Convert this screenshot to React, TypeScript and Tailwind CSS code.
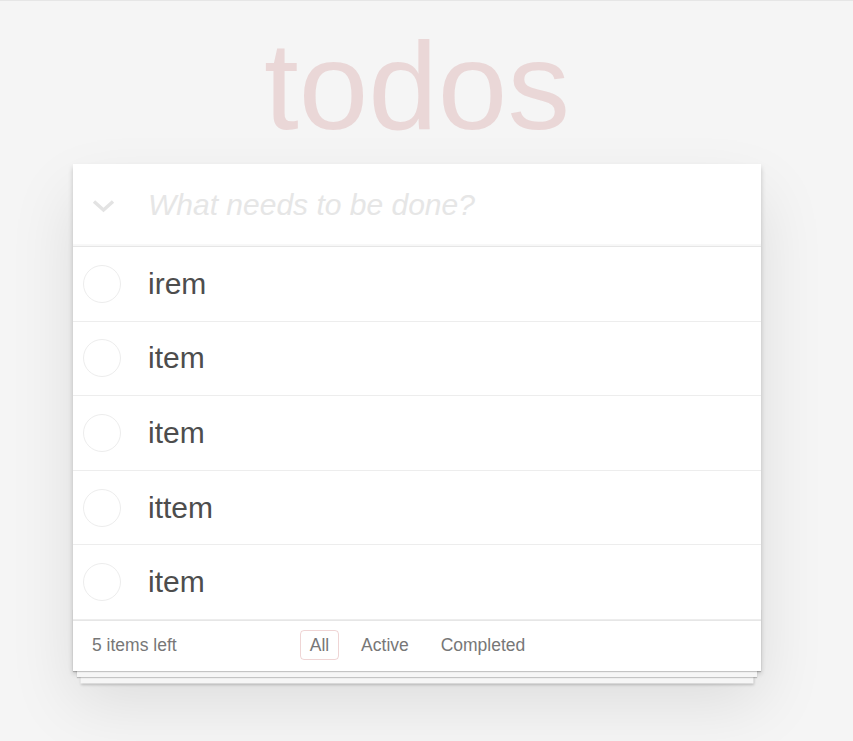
import React from 'react';

const todos = ['irem', 'item', 'item', 'ittem', 'item'];

function TodoRow({ title }: { title: string }) {
  return (
    <li className="flex h-[74.6px] items-center border-b border-[#ededed]">
      <div className="flex w-[58px] justify-center">
        <span className="block h-[38px] w-[38px] rounded-full border border-[#ededed]" />
      </div>
      <span className="pl-[17px] text-[30px] leading-[36px] text-[#4d4d4d]">{title}</span>
    </li>
  );
}

export default function App() {
  return (
    <div
      className="min-h-[741px] border-t border-[#e6e6e6] bg-[#f5f5f5] pr-[19px]"
      style={{ fontFamily: '"Liberation Sans", Arial, sans-serif' }}
    >
      <div className="mx-auto w-[688px] pt-[22px]">
        <h1 className="text-center text-[125px] font-thin leading-[125px] text-[rgba(175,47,47,0.15)]">
          todos
        </h1>

        <section className="relative mt-[16px] bg-white shadow-[0_2.5px_5px_0_rgba(0,0,0,0.2),0_31px_62px_0_rgba(0,0,0,0.1)]">
          <header className="flex h-[82px] items-center shadow-[inset_0_-2px_1px_rgba(0,0,0,0.03)]">
            <div className="flex w-[61px] justify-center pt-[2px]">
              <svg width="23" height="14" viewBox="0 0 23 14" fill="none">
                <polyline
                  points="2,2.5 11.5,11 21,2.5"
                  stroke="#e3e3e3"
                  strokeWidth="3.4"
                  strokeLinejoin="miter"
                />
              </svg>
            </div>
            <span className="pl-[14px] text-[30px] italic leading-[42px] text-[#e6e6e6]">What needs to be done?</span>
          </header>

          <ul className="relative z-[2] border-t border-[#e6e6e6] bg-white">
            {todos.map((t, i) => (
              <TodoRow key={i} title={t} />
            ))}
          </ul>

          <footer className="relative flex h-[51px] items-center border-t border-[#e6e6e6] px-[19px] pb-[1px] text-[17.5px] text-[#777]">
            <span
              aria-hidden
              className="absolute inset-x-0 bottom-0 h-[62px] shadow-[0_1px_1px_rgba(0,0,0,0.2),0_10px_0_-4px_#f6f6f6,0_11px_1px_-4px_rgba(0,0,0,0.2),0_20px_0_-7.5px_#f6f6f6,0_21px_2.5px_-7.5px_rgba(0,0,0,0.2)]"
            />
            <span className="relative w-[208px]">5 items left</span>
            <nav className="relative flex items-center gap-[12.4px]">
              <a className="rounded-[4px] border border-[rgba(175,47,47,0.2)] px-[8.75px] py-[3px] leading-[22px]">All</a>
              <a className="rounded-[4px] border border-transparent px-[8.75px] py-[3px] leading-[22px]">Active</a>
              <a className="rounded-[4px] border border-transparent px-[8.75px] py-[3px] leading-[22px]">Completed</a>
            </nav>
          </footer>
        </section>
      </div>
    </div>
  );
}
